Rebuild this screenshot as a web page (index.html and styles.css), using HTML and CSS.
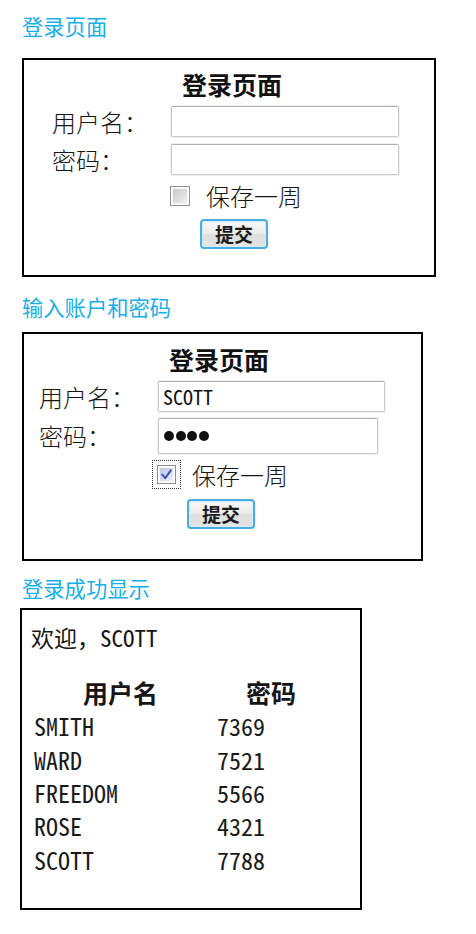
FILE: index.html
```html
<!DOCTYPE html>
<html lang="zh-CN">
<head>
<meta charset="utf-8">
<title>登录页面</title>
<link rel="stylesheet" href="styles.css">
</head>
<body>
<main class="page">
  <h2 class="sec-title sec-1">登录页面</h2>
  <form class="box login login-empty">
    <div class="login-title">登录页面</div>
    <div class="row"><label class="lbl">用户名：</label><input class="field" type="text"></div>
    <div class="row"><label class="lbl">密码：</label><input class="field" type="text"></div>
    <div class="remember"><span class="cb"></span><span class="cb-text">保存一周</span></div>
    <div class="actions"><button type="button" class="btn">提交</button></div>
  </form>

  <h2 class="sec-title sec-2">输入账户和密码</h2>
  <form class="box login login-filled">
    <div class="login-title">登录页面</div>
    <div class="row"><label class="lbl">用户名：</label><input class="field field-val" type="text" value="SCOTT"></div>
    <div class="row"><label class="lbl">密码：</label><div class="field field-pw"><span class="dot"></span><span class="dot"></span><span class="dot"></span><span class="dot"></span></div></div>
    <div class="remember"><span class="cb cb-checked"><svg viewBox="0 0 13 13" width="13" height="13"><path d="M2.3 6.6 L5.2 10.2 L10.8 2.4" fill="none" stroke="#3752b6" stroke-width="2" stroke-linecap="round" stroke-linejoin="round"/></svg></span><span class="cb-text">保存一周</span></div>
    <div class="actions"><button type="button" class="btn">提交</button></div>
  </form>

  <h2 class="sec-title sec-3">登录成功显示</h2>
  <section class="box result">
    <div class="welcome">欢迎，SCOTT</div>
    <div class="users">
      <div class="th">用户名</div><div class="th">密码</div>
      <div class="td">SMITH</div><div class="td">7369</div>
      <div class="td">WARD</div><div class="td">7521</div>
      <div class="td">FREEDOM</div><div class="td">5566</div>
      <div class="td">ROSE</div><div class="td">4321</div>
      <div class="td">SCOTT</div><div class="td">7788</div>
    </div>
  </section>
</main>
</body>
</html>
```

FILE: styles.css
```css
html, body {
  margin: 0;
  padding: 0;
  background: #ffffff;
}

body {
  font-family: "Noto Sans CJK SC", sans-serif;
  color: #161616;
}

.page {
  padding-top: 12px;
  display: flex;
  flex-direction: column;
  align-items: flex-start;
}

.sec-title {
  margin: 0 0 0 22px;
  font-size: 21.3px;
  line-height: 28px;
  font-weight: normal;
  color: #17afe8;
}

.sec-2 { margin-top: 16px; }
.sec-3 { margin-top: 13px; }

.box {
  box-sizing: border-box;
  border: 2px solid #000;
  background: #fff;
  margin: 0;
}

/* ---------- login form ---------- */
.login {
  display: flex;
  flex-direction: column;
  align-items: flex-start;
  margin-left: 22px;
}

.login-empty {
  width: 414px;
  height: 219px;
  margin-top: 18px;
  padding: 9px 0 0 29px;
}

.login-filled {
  width: 401px;
  height: 229px;
  margin-top: 11px;
  padding: 10px 0 0 16px;
}

.login-title {
  margin-left: 129px;
  font-size: 25px;
  line-height: 30px;
  font-weight: bold;
  color: #111;
}

.row {
  display: grid;
  grid-template-columns: 118px auto;
  align-items: center;
  margin-top: 7px;
}

.login-filled .row + .row { margin-top: 6px; }

.lbl {
  font-size: 24px;
  line-height: 30px;
  font-weight: 300;
  margin-left: -1px;
}

.field {
  box-sizing: border-box;
  width: 228px;
  height: 31px;
  margin: 0;
  padding: 0 4px;
  border: 1px solid #c9cbd1;
  border-top-color: #acaeb5;
  border-radius: 2px;
  box-shadow: 0 0 0 1px #eef0f3;
  background: #fff;
  font-family: "Noto Sans Mono CJK SC", "Liberation Mono", monospace;
  font-size: 20px;
  font-weight: 300;
  color: #111;
  outline: none;
}

.login-filled .field { width: 227px; }

.login-filled .field-pw {
  width: 220px;
  height: 36px;
  display: flex;
  align-items: center;
  gap: 1.7px;
  padding-left: 5px;
}

.dot {
  width: 10px;
  height: 10px;
  border-radius: 50%;
  background: #111;
}

.remember {
  display: flex;
  align-items: center;
  gap: 16px;
  padding-left: 117px;
  margin-top: 7px;
  height: 28px;
}

.login-filled .remember {
  margin-top: 6px;
  height: 29px;
}

.cb {
  box-sizing: border-box;
  width: 19px;
  height: 19px;
  padding: 2px;
  border: 1px solid #8d8e8f;
  background: linear-gradient(135deg, #c6c8cc, #eeeff0) content-box, #f7f7f7;
  box-shadow: inset 0 0 0 1px #ffffff;
  display: flex;
  align-items: center;
  justify-content: center;
}

.login-empty .cb {
  width: 20px;
  height: 20px;
}

.cb-checked {
  background: linear-gradient(135deg, #bfc6dd, #edf0f8) content-box, #f7f7f7;
  outline: 1px dotted #333;
  outline-offset: 4px;
}

.cb-checked svg {
  display: block;
  flex: none;
}

.cb-text {
  font-size: 24px;
  line-height: 28px;
  font-weight: 300;
}

.actions {
  margin-top: 9px;
  padding-left: 147px;
}

.login-filled .actions { margin-top: 10px; }

.btn {
  box-sizing: border-box;
  width: 68px;
  height: 30px;
  margin: 0;
  padding: 0;
  border: 2px solid #47ade2;
  border-radius: 4px;
  background: linear-gradient(#f8f8f8 0%, #ececec 48%, #dedede 52%, #e4e4e4 100%);
  box-shadow: inset 0 0 0 1px #d6eefa;
  font-family: "Noto Sans CJK SC", sans-serif;
  font-size: 19px;
  line-height: 26px;
  font-weight: bold;
  color: #1a1a1a;
}

/* ---------- result ---------- */
.result {
  width: 342px;
  height: 302px;
  margin: 6px 0 0 20px;
  padding: 12px 0 0 9px;
  font-family: "Noto Sans Mono CJK SC", "Liberation Mono", monospace;
}

.welcome {
  font-size: 23px;
  line-height: 30px;
  font-weight: 300;
}

.users {
  display: grid;
  grid-template-columns: 173px 108px;
  column-gap: 10px;
  margin: 24px 0 0 3px;
}

.th {
  font-family: "Noto Sans CJK SC", sans-serif;
  font-size: 25px;
  line-height: 33.33px;
  font-weight: bold;
  text-align: center;
}

.td {
  font-size: 24px;
  line-height: 33.33px;
  font-weight: 300;
  color: #1a1a1a;
}
```
